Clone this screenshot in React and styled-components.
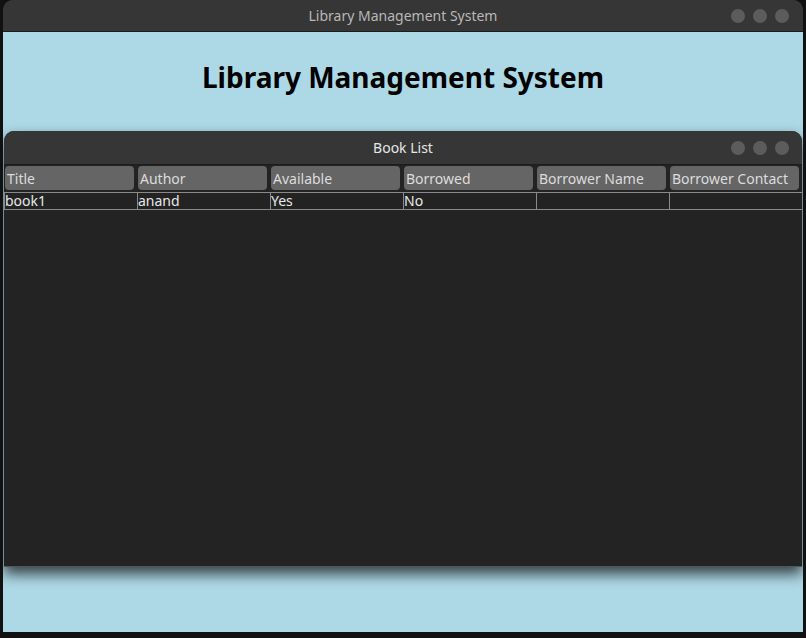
import React from 'react';
import styled, { createGlobalStyle } from 'styled-components';

const GlobalStyle = createGlobalStyle`
  html, body {
    margin: 0;
    padding: 0;
    background-color: #111111;
    font-family: 'Noto Sans', 'DejaVu Sans', sans-serif;
  }
`;

const columns = ['Title', 'Author', 'Available', 'Borrowed', 'Borrower Name', 'Borrower Contact'];
const books = [['book1', 'anand', 'Yes', 'No', '', '']];

const Screen = styled.div`
  width: 806px;
  height: 638px;
  padding: 0 3px 6px 3px;
  box-sizing: border-box;
`;

const Window = styled.div`
  height: 632px;
  display: flex;
  flex-direction: column;
  border-radius: 10px 10px 0 0;
  overflow: hidden;
  background-color: #363636;
`;

const TitleBar = styled.div`
  position: relative;
  flex: none;
  height: ${({ h }) => h}px;
  display: flex;
  align-items: center;
  justify-content: center;
  background-color: #363636;
  border-bottom: 1px solid #1c1c1c;
  color: ${({ light }) => (light ? '#e6e6e6' : '#b8b8b8')};
  font-size: 14px;
`;

const Dots = styled.div`
  position: absolute;
  right: ${({ r }) => r}px;
  top: 0;
  bottom: 0;
  display: flex;
  align-items: center;
  gap: 8px;
`;

const Dot = styled.span`
  width: 14px;
  height: 14px;
  border-radius: 50%;
  background-color: #5c5c5c;
`;

const Content = styled.div`
  flex: 1;
  background-color: #add8e6;
  display: flex;
  flex-direction: column;
  padding-top: 24px;
`;

const Heading = styled.h1`
  margin: 0;
  text-align: center;
  font-size: 28px;
  line-height: 42px;
  font-weight: 700;
  color: #000;
`;

const Inner = styled.div`
  margin: 33px 0 0 1px;
  width: 798px;
  height: 435px;
  display: flex;
  flex-direction: column;
  border-radius: 10px 10px 0 0;
  overflow: hidden;
  background-color: #232323;
  border-bottom: 1px solid #555;
  box-shadow: 0 7px 14px rgba(0, 0, 0, 0.7);
`;

const Table = styled.div`
  display: grid;
  grid-template-columns: repeat(6, 129px);
  column-gap: 4px;
  padding: 1px 0 0 1px;
`;

const HeadCell = styled.div`
  height: 24px;
  display: flex;
  align-items: center;
  padding-left: 2px;
  background-color: #656565;
  border-radius: 4px;
  color: #dcdcdc;
  font-size: 14px;
  white-space: nowrap;
`;

const Row = styled.div`
  display: grid;
  grid-template-columns: repeat(6, 133px);
  margin-top: 2px;
  border-top: 1px solid #8a8a8a;
  border-bottom: 1px solid #8a8a8a;
  border-left: 1px solid #8a8a8a;
  width: 797px;
`;

const Cell = styled.div`
  height: 16px;
  line-height: 16px;
  box-sizing: border-box;
  border-right: 1px solid #8a8a8a;
  color: #e8e8e8;
  font-size: 14px;
  white-space: nowrap;
`;

function Controls({ r }) {
  return (
    <Dots r={r}>
      <Dot />
      <Dot />
      <Dot />
    </Dots>
  );
}

export default function App() {
  return (
    <>
      <GlobalStyle />
      <Screen>
        <Window>
          <TitleBar h={31}>
            Library Management System
            <Controls r={14} />
          </TitleBar>
          <Content>
            <Heading>Library Management System</Heading>
            <Inner>
              <TitleBar h={33} light>
                Book List
                <Controls r={13} />
              </TitleBar>
              <Table>
                {columns.map((c) => (
                  <HeadCell key={c}>{c}</HeadCell>
                ))}
              </Table>
              {books.map((b, i) => (
                <Row key={i}>
                  {b.map((v, j) => (
                    <Cell key={j}>{v}</Cell>
                  ))}
                </Row>
              ))}
            </Inner>
          </Content>
        </Window>
      </Screen>
    </>
  );
}
